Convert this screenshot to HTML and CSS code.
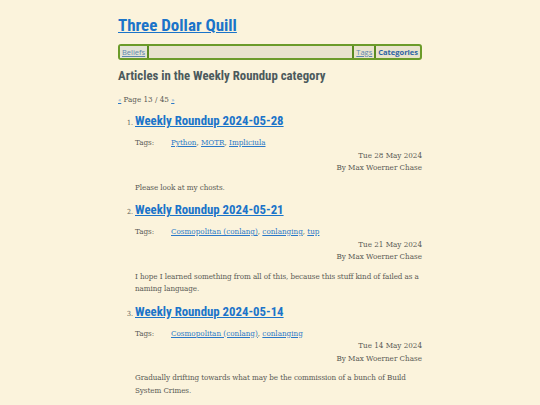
FILE: index.html
```html
<!DOCTYPE html>
<html>
<head>
<meta charset="utf-8">
<link rel="stylesheet" href="styles.css">
</head>
<body>
<div class="page">
  <h1 class="site-title"><a href="#">Three Dollar Quill</a></h1>
  <nav class="nav">
    <a class="nav-item nav-first" href="#">Beliefs</a>
    <span class="nav-fill"></span>
    <a class="nav-item nav-tags" href="#">Tags</a>
    <a class="nav-item nav-current" href="#">Categories</a>
  </nav>
  <h2 class="cat-heading">Articles in the Weekly Roundup category</h2>
  <p class="pager"><a href="#">«</a> Page 13 / 45 <a href="#">»</a></p>
  <ol class="articles">
    <li class="article">
      <h3 class="a-title"><a href="#">Weekly Roundup 2024-05-28</a></h3>
      <div class="tags"><span class="tags-label">Tags:</span><span><a href="#">Python</a>, <a href="#">MOTR</a>, <a href="#">Impliciula</a></span></div>
      <div class="meta">Tue 28 May 2024<br>By Max Woerner Chase</div>
      <p class="summary">Please look at my chosts.</p>
    </li>
    <li class="article">
      <h3 class="a-title"><a href="#">Weekly Roundup 2024-05-21</a></h3>
      <div class="tags"><span class="tags-label">Tags:</span><span><a href="#">Cosmopolitan (conlang)</a>, <a href="#">conlanging</a>, <a href="#">tup</a></span></div>
      <div class="meta">Tue 21 May 2024<br>By Max Woerner Chase</div>
      <p class="summary">I hope I learned something from all of this, because this stuff kind of failed as a naming language.</p>
    </li>
    <li class="article">
      <h3 class="a-title"><a href="#">Weekly Roundup 2024-05-14</a></h3>
      <div class="tags"><span class="tags-label">Tags:</span><span><a href="#">Cosmopolitan (conlang)</a>, <a href="#">conlanging</a></span></div>
      <div class="meta">Tue 14 May 2024<br>By Max Woerner Chase</div>
      <p class="summary">Gradually drifting towards what may be the commission of a bunch of Build System Crimes.</p>
    </li>
  </ol>
</div>
</body>
</html>
```

FILE: styles.css
```css
html, body {
  margin: 0;
  padding: 0;
  background: #fbf3dc;
}
body {
  font-family: "DejaVu Serif", serif;
  font-stretch: semi-condensed;
  font-size: 8px;
  color: #5a5a55;
  line-height: 12.5px;
}
a { color: #2a78c8; }
.page {
  width: 304px;
  margin: 0 auto;
  padding-top: 14px;
}
.site-title {
  font-family: Roboto, sans-serif;
  font-size: 17px;
  font-weight: 700;
  margin: 0;
  line-height: 22px;
}
.site-title a { color: #1b74c9; }
.nav {
  display: flex;
  margin-top: 8px;
  height: 12px;
  border: 2px solid #6b9b2a;
  border-radius: 3px;
  background: #e9e3cd;
  font-family: "Open Sans", sans-serif;
  font-stretch: normal;
  font-size: 7.5px;
  line-height: 12px;
}
.nav-item {
  padding: 0 2px;
  color: #5d87ae;
}
.nav-first {
  border-right: 2px solid #5a8a22;
  background: #e3e3d6;
}
.nav-fill { flex: 1; border-right: 2px solid #5a8a22; }
.nav-tags { border-right: 2px solid #5a8a22; }
.nav-current {
  font-weight: 700;
  text-decoration: none;
  color: #2d62a3;
}
.cat-heading {
  font-family: Roboto, sans-serif;
  font-size: 12.8px;
  font-weight: 700;
  color: #4c5a5c;
  margin: 8px 0 0;
  line-height: 16px;
}
.pager {
  margin: 10px 0 0;
  font-size: 8px;
  line-height: 12px;
}
.pager a { font-size: 6px; }
.articles {
  margin: 6px 0 0;
  padding-left: 17px;
  font-size: 7px;
}
.a-title {
  font-family: Roboto, sans-serif;
  font-size: 12.8px;
  font-weight: 700;
  margin: 0;
  line-height: 18px;
}
.a-title a { color: #1b74c9; }
.tags {
  display: flex;
  margin-top: 7px;
  font-size: 8px;
  line-height: 12.5px;
}
.tags-label { width: 36px; }
.meta {
  text-align: right;
  font-size: 8px;
  line-height: 12.5px;
}
.summary {
  margin: 7px 0 7px;
  font-size: 8px;
  line-height: 12.5px;
  letter-spacing: -0.08px;
}
```
